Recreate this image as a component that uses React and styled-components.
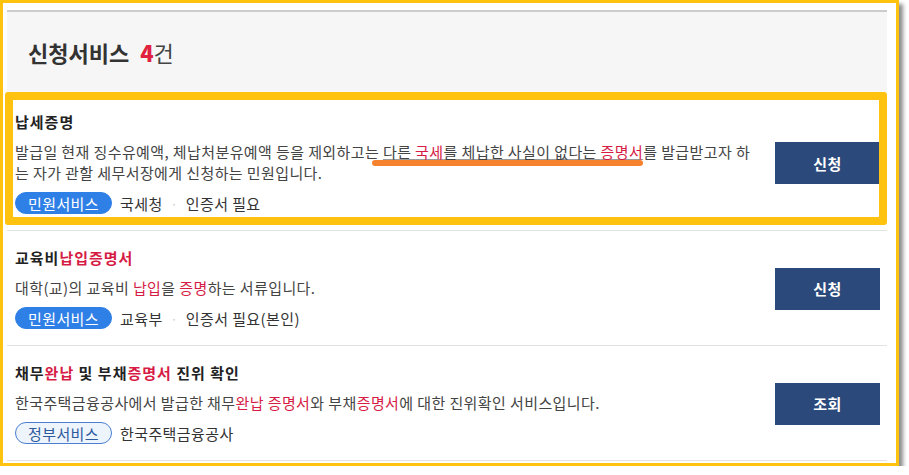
import React from 'react';
import styled, { createGlobalStyle } from 'styled-components';

const GlobalStyle = createGlobalStyle`
  html, body {
    margin: 0;
    padding: 0;
    background: #fff;
  }
  body {
    font-family: "Noto Sans CJK KR", "Noto Sans", sans-serif;
    color: #333;
  }
`;

const Frame = styled.div`
  box-sizing: border-box;
  width: 899px;
  height: 466px;
  border: 3px solid #ffc20e;
  padding: 7px 9px 0 4px;
  background: #fff;
  box-shadow: 4px 4px 4px rgba(0, 0, 0, 0.45);
`;

const Header = styled.div`
  display: flex;
  align-items: center;
  height: 80px;
  padding-left: 21px;
  border-top: 2px solid #cccccc;
  background: #f6f6f6;
`;

const HeaderTitle = styled.h2`
  margin: 0;
  font-size: 22px;
  font-weight: 700;
  color: #333;

  strong {
    margin-left: 11px;
    color: #e0213f;
  }
  span {
    font-weight: 400;
    color: #444;
  }
`;

const List = styled.ul`
  list-style: none;
  margin: 0;
  padding: 3px 0 0;
`;

const Row = styled.li`
  position: relative;
  display: flex;
  align-items: center;
  padding: 17px 7px 16px 8px;
  border-bottom: 1px solid #e2e2e2;
`;

const Highlight = styled.span`
  position: absolute;
  top: -3px;
  left: -2px;
  right: 0;
  bottom: 5px;
  border: 8px solid #ffc20e;
  border-radius: 3px;
  pointer-events: none;
`;

const Stroke = styled.span`
  position: absolute;
  left: 365px;
  top: 65px;
  width: 271px;
  height: 6px;
  border-radius: 3px;
  background: #f6822d;
  pointer-events: none;
`;

const Body = styled.div`
  flex: 1;
  min-width: 0;
  margin-right: 22px;
`;

const Title = styled.h3`
  margin: 0 0 9px;
  font-size: 15px;
  line-height: 20px;
  font-weight: 700;
  letter-spacing: 1px;
  color: #222;
`;

const Desc = styled.p`
  margin: 0;
  font-size: 15px;
  line-height: 21px;
  letter-spacing: 0.4px;
  color: #444;
  word-break: break-all;
`;

const Red = styled.em`
  font-style: normal;
  color: #d61c45;
  text-decoration: ${({ $under }) => ($under ? 'underline' : 'none')};
  text-decoration-color: #999;
  text-underline-offset: 1px;
`;

const Under = styled.span`
  text-decoration: underline;
  text-decoration-color: #999;
  text-underline-offset: 1px;
`;

const Meta = styled.div`
  display: flex;
  align-items: center;
  gap: 8px;
  height: 22px;
  margin-top: 9px;
  font-size: 15px;
  letter-spacing: 0.4px;
  color: #333;
`;

const Pill = styled.span`
  box-sizing: border-box;
  display: inline-flex;
  align-items: center;
  height: 22px;
  padding: 0 12px;
  border-radius: 11px;
  font-size: 15px;
  border: 1px solid ${({ $outline }) => ($outline ? '#4a7fcf' : '#2f80e6')};
  background: ${({ $outline }) => ($outline ? '#eef4fc' : '#2f80e6')};
  color: ${({ $outline }) => ($outline ? '#2d5a9c' : '#fff')};
`;

const Dot = styled.span`
  color: #c8c8c8;
  font-size: 12px;
`;

const ActionButton = styled.button`
  flex: none;
  width: 105px;
  height: 42px;
  border: 0;
  background: #2b4a7b;
  color: #fff;
  font-family: inherit;
  font-size: 15px;
  font-weight: 700;
  letter-spacing: 0.5px;
  cursor: pointer;
`;

const services = [
  {
    title: '납세증명',
    desc: (
      <>
        발급일 현재 징수유예액, 체납처분유예액 등을 제외하고는 <Under>다른 </Under>
        <Red $under>국세</Red>
        <Under>를 체납한 사실이 없다는 </Under>
        <Red $under>증명서</Red>를 발급받고자 하
        <br />는 자가 관할 세무서장에게 신청하는 민원입니다.
      </>
    ),
    kind: '민원서비스',
    org: '국세청',
    note: '인증서 필요',
    action: '신청',
    highlighted: true,
  },
  {
    title: (
      <>
        교육비<Red>납입증명서</Red>
      </>
    ),
    desc: (
      <>
        대학(교)의 교육비 <Red>납입</Red>을 <Red>증명</Red>하는 서류입니다.
      </>
    ),
    kind: '민원서비스',
    org: '교육부',
    note: '인증서 필요(본인)',
    action: '신청',
  },
  {
    title: (
      <>
        채무<Red>완납</Red> 및 부채<Red>증명서</Red> 진위 확인
      </>
    ),
    desc: (
      <>
        한국주택금융공사에서 발급한 채무<Red>완납</Red> <Red>증명서</Red>와 부채
        <Red>증명서</Red>에 대한 진위확인 서비스입니다.
      </>
    ),
    kind: '정부서비스',
    outline: true,
    org: '한국주택금융공사',
    action: '조회',
  },
];

const App = () => {
  return (
    <>
      <GlobalStyle />
      <Frame>
        <Header>
          <HeaderTitle>
            신청서비스<strong>4</strong>
            <span>건</span>
          </HeaderTitle>
        </Header>
        <List>
          {services.map((s, i) => (
            <Row key={i}>
              <Body>
                <Title>{s.title}</Title>
                <Desc>{s.desc}</Desc>
                <Meta>
                  <Pill $outline={s.outline}>{s.kind}</Pill>
                  <span>{s.org}</span>
                  {s.note && (
                    <>
                      <Dot>·</Dot>
                      <span>{s.note}</span>
                    </>
                  )}
                </Meta>
              </Body>
              <ActionButton>{s.action}</ActionButton>
              {s.highlighted && (
                <>
                  <Highlight />
                  <Stroke />
                </>
              )}
            </Row>
          ))}
        </List>
      </Frame>
    </>
  );
};

export default App;
